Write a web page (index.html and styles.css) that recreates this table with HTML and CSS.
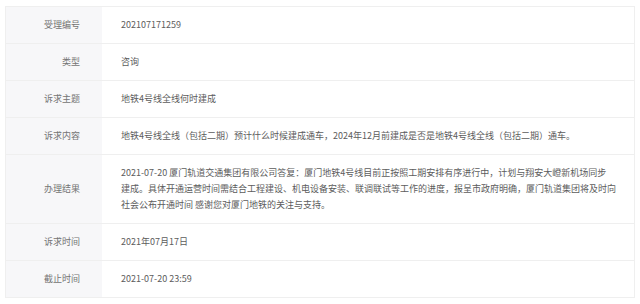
FILE: index.html
```html
<!DOCTYPE html>
<html lang="zh-CN">
<head>
<meta charset="utf-8">
<link rel="stylesheet" href="styles.css">
</head>
<body>
<div class="detail">
  <div class="row"><div class="label">受理编号</div><div class="value">202107171259</div></div>
  <div class="row"><div class="label">类型</div><div class="value">咨询</div></div>
  <div class="row"><div class="label">诉求主题</div><div class="value">地铁4号线全线何时建成</div></div>
  <div class="row"><div class="label">诉求内容</div><div class="value">地铁4号线全线（包括二期）预计什么时候建成通车，2024年12月前建成是否是地铁4号线全线（包括二期）通车。</div></div>
  <div class="row"><div class="label">办理结果</div><div class="value">2021-07-20 厦门轨道交通集团有限公司答复：厦门地铁4号线目前正按照工期安排有序进行中，计划与翔安大嶝新机场同步<br>建成。具体开通运营时间需结合工程建设、机电设备安装、联调联试等工作的进度，报呈市政府明确，厦门轨道集团将及时向<br>社会公布开通时间 感谢您对厦门地铁的关注与支持。</div></div>
  <div class="row"><div class="label">诉求时间</div><div class="value">2021年07月17日</div></div>
  <div class="row"><div class="label">截止时间</div><div class="value">2021-07-20 23:59</div></div>
</div>
</body>
</html>
```
FILE: styles.css
```css
html, body {
  margin: 0;
  padding: 0;
  background: #ffffff;
}
body {
  font-family: "Noto Sans CJK SC", "Noto Sans", sans-serif;
  font-size: 9px;
  line-height: 16px;
  color: #5c5c5c;
}
.detail {
  margin: 6px 5px 0 5px;
  width: 630px;
  border: 1px solid #efefef;
  border-bottom: none;
  box-sizing: border-box;
}
.row {
  display: grid;
  grid-template-columns: 96px 1fr;
  border-bottom: 1px solid #efefef;
}
.label {
  background: #f7f7f9;
  color: #747474;
  text-align: right;
  padding: 10px 22px 10px 0;
  display: flex;
  align-items: center;
  justify-content: flex-end;
}
.value {
  padding: 10px 10px 10px 19px;
  white-space: nowrap;
}
```
